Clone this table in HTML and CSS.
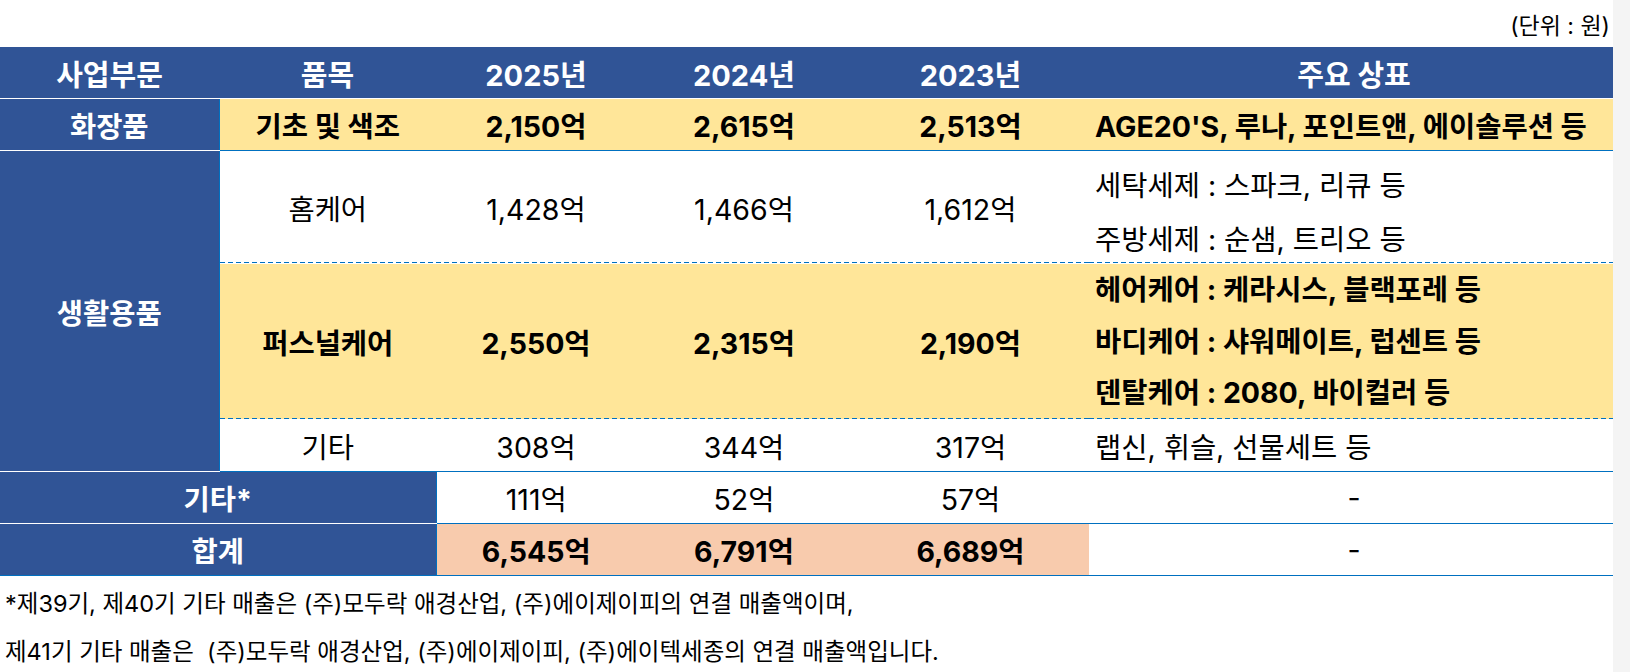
FILE: index.html
```html
<!DOCTYPE html>
<html lang="ko">
<head>
<meta charset="utf-8">
<title>사업부문별 매출</title>
<link rel="stylesheet" href="styles.css">
</head>
<body>
<div class="page">
  <div class="unit">(단위 : 원)</div>
  <table class="sales">
    <colgroup>
      <col class="c-seg">
      <col class="c-item">
      <col class="c-y25">
      <col class="c-y24">
      <col class="c-y23">
      <col class="c-brand">
    </colgroup>
    <thead>
      <tr class="r-head">
        <th>사업부문</th>
        <th>품목</th>
        <th>2025년</th>
        <th>2024년</th>
        <th>2023년</th>
        <th class="brand-head">주요 상표</th>
      </tr>
    </thead>
    <tbody>
      <tr class="r-std">
        <th class="seg">화장품</th>
        <td class="hl bold solid">기초 및 색조</td>
        <td class="hl bold solid">2,150억</td>
        <td class="hl bold solid">2,615억</td>
        <td class="hl bold solid">2,513억</td>
        <td class="hl bold solid brand">AGE20'S, 루나, 포인트앤, 에이솔루션 등</td>
      </tr>
      <tr class="r-home">
        <th class="seg" rowspan="3">생활용품</th>
        <td class="dash">홈케어</td>
        <td class="dash">1,428억</td>
        <td class="dash">1,466억</td>
        <td class="dash">1,612억</td>
        <td class="dash brand lines-home">
          <div class="ln">세탁세제 : 스파크, 리큐 등</div>
          <div class="ln">주방세제 : 순샘, 트리오 등</div>
        </td>
      </tr>
      <tr class="r-personal">
        <td class="hl bold dash">퍼스널케어</td>
        <td class="hl bold dash">2,550억</td>
        <td class="hl bold dash">2,315억</td>
        <td class="hl bold dash">2,190억</td>
        <td class="hl bold dash brand lines-personal">
          <div class="ln">헤어케어 : 케라시스, 블랙포레 등</div>
          <div class="ln">바디케어 : 샤워메이트, 럽센트 등</div>
          <div class="ln">덴탈케어 : 2080, 바이컬러 등</div>
        </td>
      </tr>
      <tr class="r-std">
        <td class="solid">기타</td>
        <td class="solid">308억</td>
        <td class="solid">344억</td>
        <td class="solid">317억</td>
        <td class="solid brand">랩신, 휘슬, 선물세트 등</td>
      </tr>
      <tr class="r-std">
        <th class="seg" colspan="2">기타*</th>
        <td class="solid">111억</td>
        <td class="solid">52억</td>
        <td class="solid">57억</td>
        <td class="solid dashmark">-</td>
      </tr>
      <tr class="r-std r-total">
        <th class="seg" colspan="2">합계</th>
        <td class="total bold solid">6,545억</td>
        <td class="total bold solid">6,791억</td>
        <td class="total bold solid">6,689억</td>
        <td class="solid dashmark">-</td>
      </tr>
    </tbody>
  </table>
  <div class="notes">
    <p>*제39기, 제40기 기타 매출은 (주)모두락 애경산업, (주)에이제이피의 연결 매출액이며,</p>
    <p>제41기 기타 매출은&nbsp; (주)모두락 애경산업, (주)에이제이피, (주)에이텍세종의 연결 매출액입니다.</p>
  </div>
</div>
</body>
</html>
```
FILE: styles.css
```css
html {
  background: #f4f4f4;
}

body {
  margin: 0;
  width: 1613px;
  min-height: 672px;
  background: #ffffff;
  font-family: Inter, "Noto Sans CJK KR", sans-serif;
  color: #000000;
}

.page {
  display: flex;
  flex-direction: column;
}

.unit {
  height: 47px;
  display: flex;
  align-items: center;
  justify-content: flex-end;
  padding-right: 3px;
  font-size: 23px;
  color: #000;
}

.sales {
  width: 1613px;
  border-collapse: collapse;
  table-layout: fixed;
  font-size: 28.5px;
}

.c-seg { width: 219px; }
.c-item { width: 217px; }
.c-y25 { width: 200px; }
.c-y24 { width: 216px; }
.c-y23 { width: 237px; }
.c-brand { width: 524px; }

.sales th,
.sales td {
  padding: 0;
  text-align: center;
  vertical-align: middle;
  white-space: nowrap;
  overflow: hidden;
}

.r-head th {
  height: 51px;
  background: #305496;
  color: #ffffff;
  font-weight: 700;
  font-size: 29px;
  border-bottom: 1px solid #ffffff;
}

.r-head .brand-head {
  padding-left: 6px;
}

.r-std td, .r-std th { height: 51px; }
.r-home td { height: 112px; }
.r-personal td { height: 155px; }

.seg {
  background: #305496;
  color: #ffffff;
  font-weight: 700;
  border-bottom: 1px solid #ffffff;
  border-right: 1px solid #0070c0;
}

.r-total .seg {
  border-bottom: 1px solid #0070c0;
}

.hl { background-color: #ffe699; }
.total { background-color: #f8cbad; }
.bold { font-weight: 700; }

.solid { border-bottom: 1px solid #0070c0; }

.dash {
  border-bottom: 1px solid transparent;
  background-image: repeating-linear-gradient(to right, #0070c0 0 5px, transparent 5px 8px);
  background-size: 100% 1px;
  background-position: left bottom;
  background-repeat: no-repeat;
}

.sales .brand {
  text-align: left;
  padding-left: 6px;
}

.sales .lines-home {
  vertical-align: top;
}

.lines-home .ln {
  height: 54px;
  line-height: 54px;
}

.lines-home .ln:first-child {
  padding-top: 8px;
}

.lines-home .ln:last-child {
  height: 50px;
}

.lines-personal .ln {
  height: 51.6px;
  line-height: 51.6px;
  overflow: hidden;
}

.sales .dashmark {
  padding-left: 6px;
}

.notes {
  padding: 4px 0 0 5px;
  font-size: 23.5px;
  line-height: 48px;
}

.notes p {
  margin: 0;
}
```
